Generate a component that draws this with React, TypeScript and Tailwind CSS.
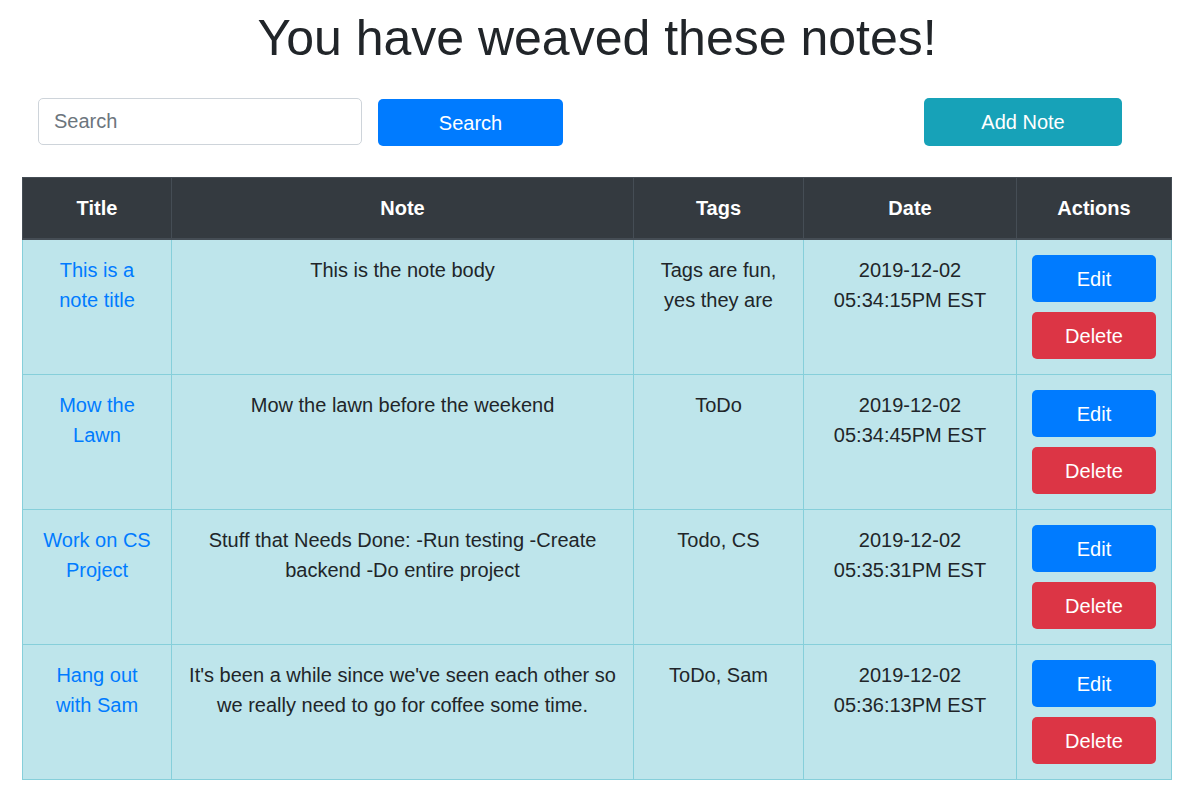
const notes = [
  {
    title: 'This is a note title',
    body: 'This is the note body',
    tags: 'Tags are fun, yes they are',
    date: '2019-12-02',
    time: '05:34:15PM EST',
  },
  {
    title: 'Mow the Lawn',
    body: 'Mow the lawn before the weekend',
    tags: 'ToDo',
    date: '2019-12-02',
    time: '05:34:45PM EST',
  },
  {
    title: 'Work on CS Project',
    body: 'Stuff that Needs Done: -Run testing -Create backend -Do entire project',
    tags: 'Todo, CS',
    date: '2019-12-02',
    time: '05:35:31PM EST',
  },
  {
    title: 'Hang out with Sam',
    body: "It's been a while since we've seen each other so we really need to go for coffee some time.",
    tags: 'ToDo, Sam',
    date: '2019-12-02',
    time: '05:36:13PM EST',
  },
]

const headers = ['Title', 'Note', 'Tags', 'Date', 'Actions']

export default function App() {
  return (
    <div className="min-h-[792px] bg-white font-['Liberation_Sans',Arial,sans-serif] text-[20px] leading-[30px] text-[#212529]">
      <h1 className="pt-2 pl-2 text-center text-[50px] leading-[60px] font-normal">
        You have weaved these notes!
      </h1>

      <div className="mt-[30px] flex items-start pl-[38px]">
        <input
          type="text"
          placeholder="Search"
          className="h-[47px] w-[324px] rounded-[5px] border border-[#ced4da] px-[15px] text-[20px] outline-none placeholder:text-[#6c757d]"
        />
        <button className="mt-px ml-4 h-[47px] w-[185px] rounded-[5px] bg-[#007bff] text-white">
          Search
        </button>
        <button className="ml-[361px] h-[48px] w-[198px] rounded-[5px] bg-[#17a2b8] text-white">
          Add Note
        </button>
      </div>

      <div className="mt-[31px] px-[22px]">
        <table className="w-[1149px] table-fixed border-collapse text-center">
          <colgroup>
            <col className="w-[149px]" />
            <col className="w-[462px]" />
            <col className="w-[170px]" />
            <col className="w-[213px]" />
            <col className="w-[155px]" />
          </colgroup>
          <thead>
            <tr className="bg-[#343a40] text-white">
              {headers.map((h) => (
                <th
                  key={h}
                  className="border border-b-2 border-[#454d55] px-[15px] py-[15px] font-bold"
                >
                  {h}
                </th>
              ))}
            </tr>
          </thead>
          <tbody>
            {notes.map((n) => (
              <tr key={n.title} className="bg-[#bee5eb] align-top">
                <td className="border border-[#86cfda] px-[15px] py-[15px] text-[#007bff]">
                  {n.title}
                </td>
                <td className="border border-[#86cfda] px-[15px] py-[15px]">{n.body}</td>
                <td className="border border-[#86cfda] px-[15px] py-[15px]">{n.tags}</td>
                <td className="border border-[#86cfda] px-[15px] py-[15px]">
                  {n.date}
                  <br />
                  {n.time}
                </td>
                <td className="border border-[#86cfda] px-[15px] py-[15px]">
                  <div className="flex flex-col gap-[10px]">
                    <button className="h-[47px] w-full rounded-[5px] bg-[#007bff] text-white">
                      Edit
                    </button>
                    <button className="h-[47px] w-full rounded-[5px] bg-[#dc3545] text-white">
                      Delete
                    </button>
                  </div>
                </td>
              </tr>
            ))}
          </tbody>
        </table>
      </div>
    </div>
  )
}
